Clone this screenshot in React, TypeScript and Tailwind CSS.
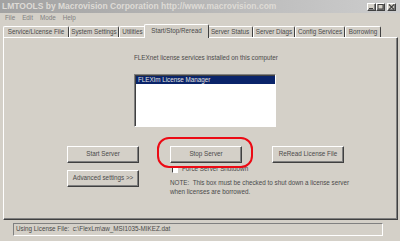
import React from "react";

const TABS = [
  { label: "Service/License File", w: "w-[66px]" },
  { label: "System Settings", w: "w-[50px]" },
  { label: "Utilities", w: "w-[27px]" },
  { label: "Start/Stop/Reread", w: "w-[65px]", active: true },
  { label: "Server Status", w: "w-[46px]" },
  { label: "Server Diags", w: "w-[42px]" },
  { label: "Config Services", w: "w-[50px]" },
  { label: "Borrowing", w: "w-[36px]" },
];

function Bevel({ children, className = "" }: { children?: React.ReactNode; className?: string }) {
  return (
    <div
      className={
        "flex items-center justify-center bg-[#d4d0c8] border-t border-l border-t-white border-l-white border-b border-r border-b-[#404040] border-r-[#404040] shadow-[inset_-1px_-1px_0_#808080] " +
        className
      }
    >
      {children}
    </div>
  );
}

function WinButton({ kind }: { kind: "min" | "max" | "close" }) {
  return (
    <Bevel className="w-[9px] h-[8px]">
      <svg width="7" height="6" viewBox="0 0 7 6" className="block">
        {kind === "min" && <rect x="1" y="4" width="4" height="1" fill="#404040" />}
        {kind === "max" && (
          <rect x="1" y="0.5" width="5" height="4.5" fill="none" stroke="#404040" strokeWidth="1" />
        )}
        {kind === "close" && (
          <path d="M1 0.5 L6 5.5 M6 0.5 L1 5.5" stroke="#404040" strokeWidth="1.1" />
        )}
      </svg>
    </Bevel>
  );
}

function Button({ label }: { label: string }) {
  return (
    <Bevel className="w-[72px] h-[17px] text-[#4a4a4a] whitespace-nowrap">{label}</Bevel>
  );
}

export default function App() {
  return (
    <div className="w-[400px] h-[241px] overflow-hidden bg-[#d4d0c8] flex flex-col font-['Liberation_Sans',Arial,sans-serif] text-[6.3px] leading-none text-[#4a4a4a]">
      {/* title bar */}
      <div className="h-[13px] flex items-center justify-between pl-[2px] pr-[4px] bg-linear-to-r from-[#a2a2a2] to-[#cdcdcd]">
        <span className="font-bold text-[8.5px] text-[#dedbd6] whitespace-nowrap">
          LMTOOLS by Macrovision Corporation http://www.macrovision.com
        </span>
        <div className="flex items-center">
          <WinButton kind="min" />
          <WinButton kind="max" />
          <div className="w-[2px]" />
          <WinButton kind="close" />
        </div>
      </div>

      {/* menu */}
      <div className="h-[11px] flex items-center gap-[7px] pl-[5px] text-[#808080]">
        <span>File</span>
        <span>Edit</span>
        <span>Mode</span>
        <span>Help</span>
      </div>

      {/* tabs */}
      <div className="h-[13px] flex items-end pl-[3px]">
        {TABS.map((t) =>
          t.active ? (
            <div
              key={t.label}
              className={`${t.w} -mx-[2px] h-[14px] -mb-[1px] relative z-10 bg-[#d4d0c8] border-t border-l border-white border-r border-r-[#404040] rounded-t-[2px] flex items-center justify-center whitespace-nowrap`}
            >
              {t.label}
            </div>
          ) : (
            <div
              key={t.label}
              className={`${t.w} h-[11px] border-t border-l border-white border-r border-r-[#404040] rounded-t-[2px] flex items-center justify-center whitespace-nowrap`}
            >
              {t.label}
            </div>
          )
        )}
      </div>

      {/* panel */}
      <div className="h-[183px] ml-[3px] mr-[2px] border-t border-l border-white border-b border-r border-b-[#404040] border-r-[#404040] shadow-[inset_-1px_-1px_0_#808080] flex flex-col">
        <div className="pl-[130px] pt-[16px] flex flex-col">
          <div className="h-[8px] flex items-center whitespace-nowrap">
            FLEXnet license services installed on this computer
          </div>
          <div className="mt-[12px] w-[142px] h-[53px] bg-white border-t border-l border-[#808080] border-b border-r border-b-white border-r-white shadow-[inset_1px_1px_0_#404040]">
            <div className="ml-[1px] mt-[1px] h-[8px] bg-[#0a246a] text-[#e4e3e0] flex items-center pl-[2px] whitespace-nowrap">
              FLEXlm License Manager
            </div>
          </div>
        </div>

        <div className="mt-[19px] pl-[63px] flex items-start">
          <div className="flex flex-col gap-[7px]">
            <Button label="Start Server" />
            <Button label="Advanced settings >>" />
          </div>

          <div className="ml-[31px] w-[72px] relative flex flex-col">
            <div className="absolute left-[-13px] top-[-9px] w-[96px] h-[31px] rounded-[12px] border-2 border-[#ec0a14] z-10" />
            <Button label="Stop Server" />
            <div className="mt-[3px] h-[7px] flex items-center gap-[4px] pl-[2px] whitespace-nowrap">
              <div className="w-[6px] h-[6px] shrink-0 bg-white border-t border-l border-[#404040] border-b border-r border-b-white border-r-white" />
              <span>Force Server Shutdown</span>
            </div>
            <div className="mt-[5px] leading-[9px] whitespace-pre">
              {"NOTE:  This box must be checked to shut down a license server\nwhen licenses are borrowed."}
            </div>
          </div>

          <div className="ml-[30px]">
            <Button label="ReRead License File" />
          </div>
        </div>
      </div>

      {/* status bar */}
      <div className="pt-[3px] pl-[13px]">
        <div className="w-[370px] h-[13px] border-t border-l border-[#808080] border-b border-r border-b-white border-r-white flex items-center pl-[2px] whitespace-pre">
          {"Using License File:  c:\\FlexLm\\aw_MSI1035-MIKEZ.dat"}
        </div>
      </div>
    </div>
  );
}
